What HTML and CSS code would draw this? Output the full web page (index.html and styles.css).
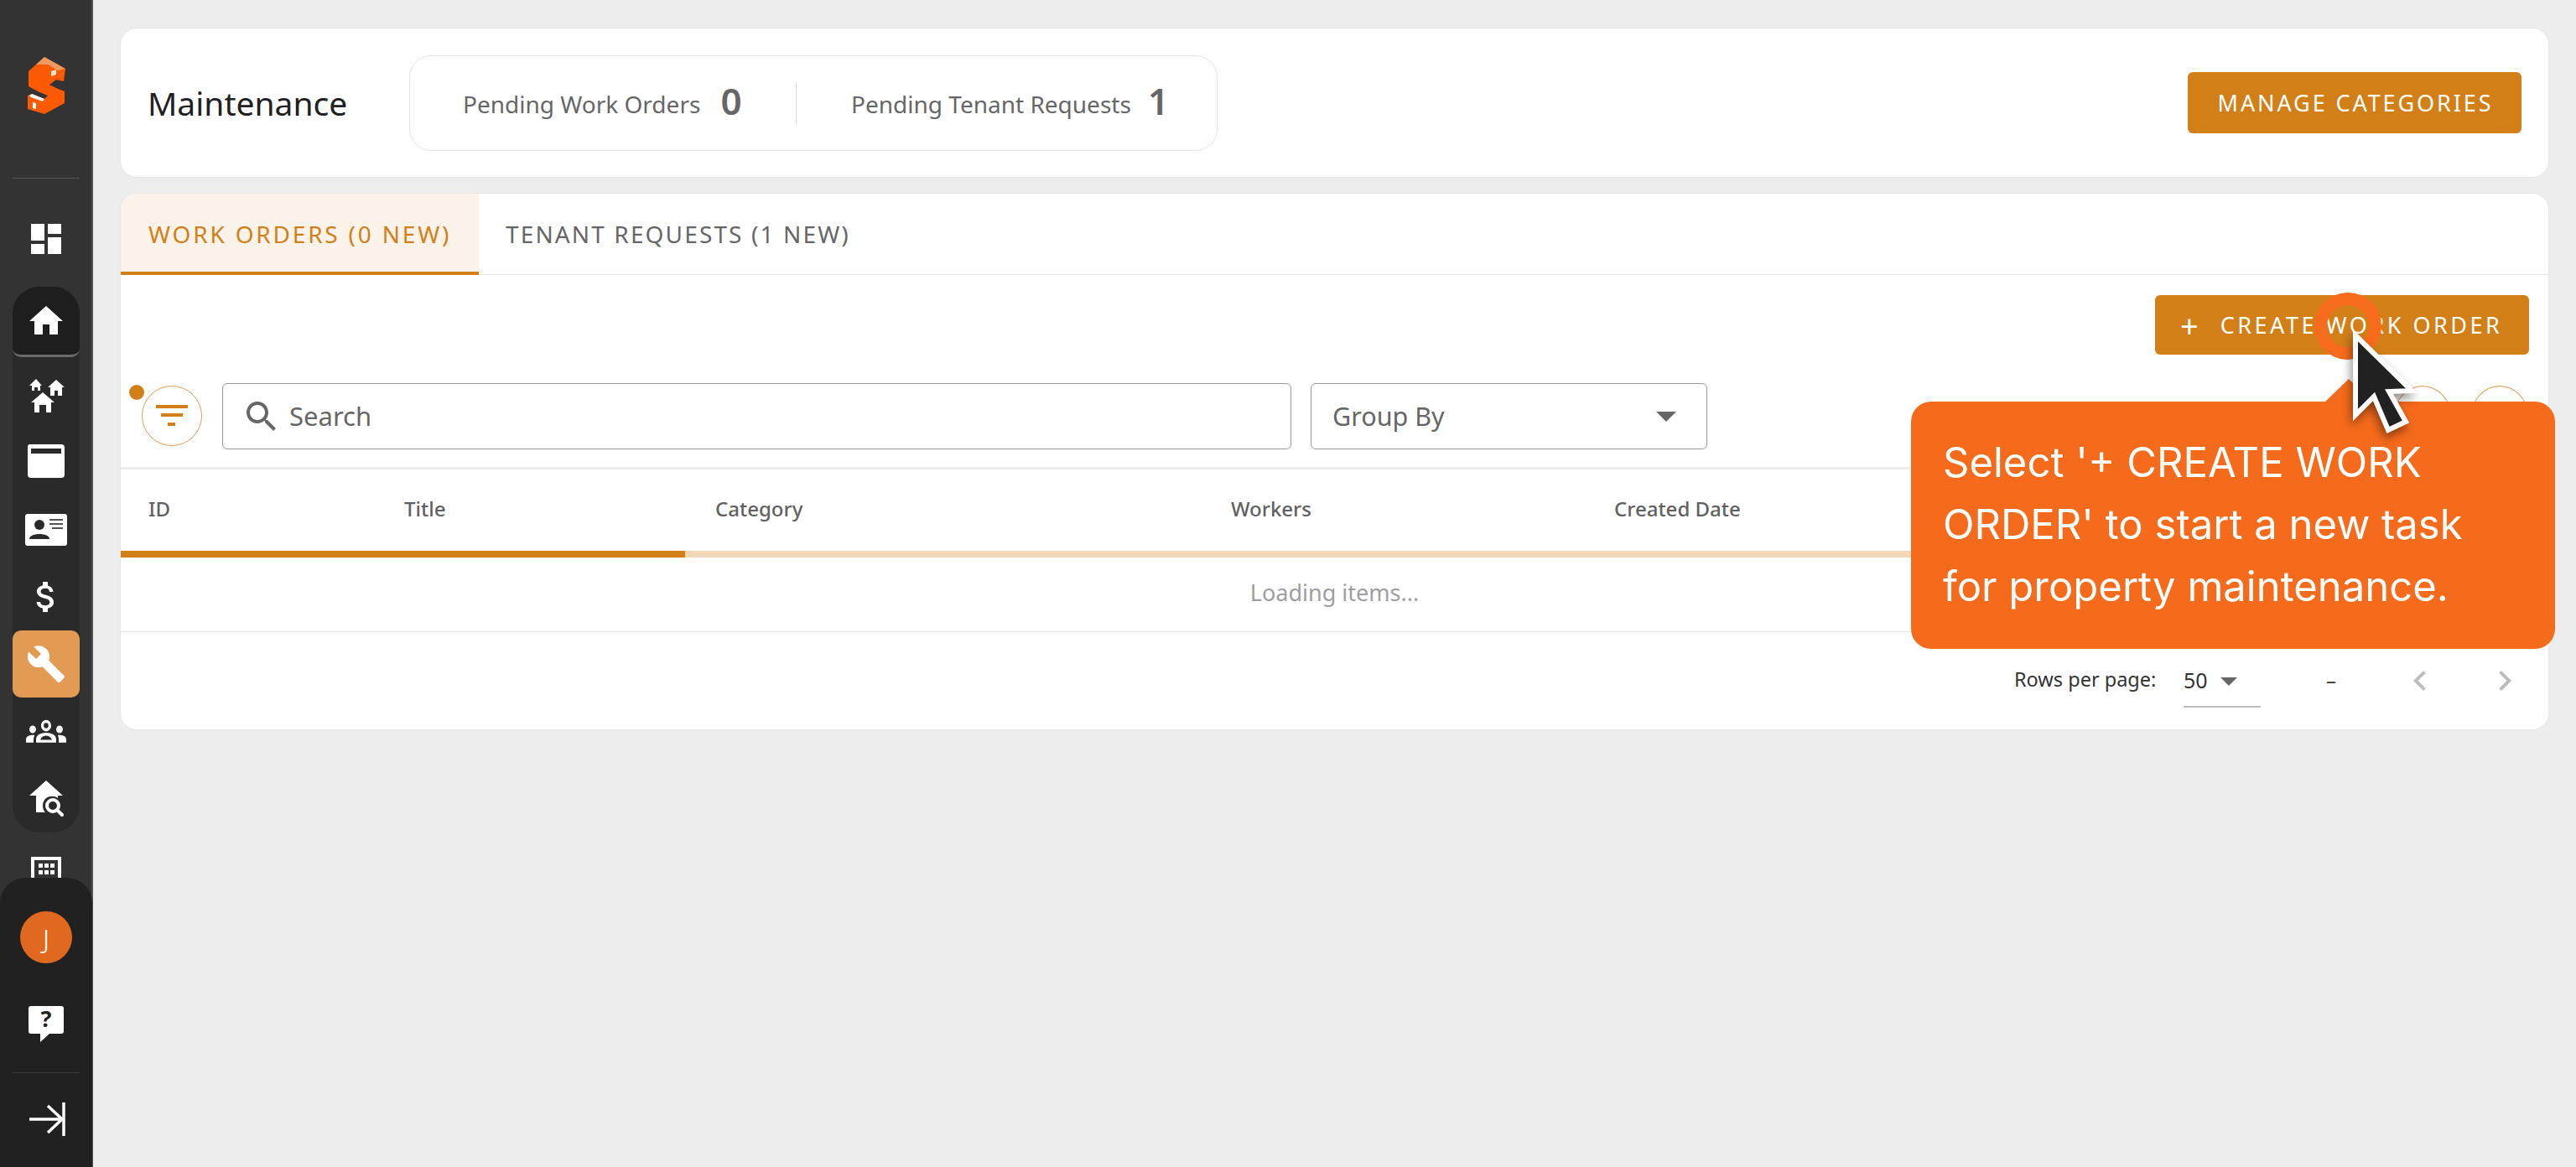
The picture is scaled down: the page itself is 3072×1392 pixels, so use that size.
FILE: index.html
```html
<!DOCTYPE html>
<html lang="en">
<head>
<meta charset="utf-8">
<title>Maintenance</title>
<link rel="stylesheet" href="styles.css">
</head>
<body>
<div class="app">
  <aside class="sidebar">
    <div class="nav">
      <div class="logo">
        <svg width="48" height="70" viewBox="-2 0 48 70">
          <path fill="#ff5a00" d="M20 0 L45 14 L43 29 L34 27 L26 33 L34 37 L44 41 L44 55 L20 68 L0 62 L0 46 L5 44 L20 50 L24 46 L12 41 L1 35 L1 17 Z"/>
          <path fill="#f09a62" d="M20 0 L45 14 L36 16 L24 9 L10 9 Z"/>
          <path fill="#fff" opacity=".8" d="M28 17 L34 15 L34 21 L28 23 Z"/>
          <path fill="#fff" d="M2 46 L5 44 L20 50 L18 53 L4 48 Z M6 54 L10 55 L10 62 L6 61 Z"/>
        </svg>
      </div>
      <div class="nav-item dash">
        <svg class="ico" viewBox="0 0 24 24"><path d="M3 13h8V3H3v10zm0 8h8v-6H3v6zm10 0h8V11h-8v10zm0-18v6h8V3h-8z"/></svg>
      </div>
      <div class="group">
        <div class="nav-item home">
          <svg class="ico" viewBox="0 0 24 24"><path d="M10 20v-6h4v6h5v-8h3L12 3 2 12h3v8z"/></svg>
        </div>
        <div class="nav-item">
          <svg class="ico" viewBox="0 0 48 48"><path d="M4 12 L12 4 L19 12 H17 V18 H14 V14 H10 V18 H7 V12Z M26 14 L36 5 L46 14 H43 V24 H38 V18 H34 V24 H29 V14Z M6 32 L20 20 L34 32 H30 V44 H24 V35 H16 V44 H10 V32Z"/></svg>
        </div>
        <div class="nav-item">
          <svg class="ico" viewBox="0 0 48 48"><path fill-rule="evenodd" d="M4 2 H42 Q46 2 46 6 V38 Q46 42 42 42 H6 Q2 42 2 38 V6 Q2 2 4 2Z M6 7 V13 H42 V7Z"/></svg>
        </div>
        <div class="nav-item">
          <svg class="ico wide" viewBox="0 0 50 38"><path fill="#fff" d="M3 0 H47 Q50 0 50 3 V35 Q50 38 47 38 H3 Q0 38 0 35 V3 Q0 0 3 0Z"/><circle cx="17" cy="13" r="6" fill="#2a2a2a"/><path fill="#2a2a2a" d="M5 30 C5 22 29 22 29 30Z"/><path fill="none" stroke="#555" stroke-width="2" d="M29 7H45M29 12H45M32 17H45"/></svg>
        </div>
        <div class="nav-item">
          <svg class="ico" viewBox="0 0 24 24"><path d="M11.8 10.9c-2.27-.59-3-1.2-3-2.15 0-1.09 1.01-1.85 2.7-1.85 1.78 0 2.44.85 2.5 2.1h2.21c-.07-1.72-1.12-3.3-3.21-3.81V3h-3v2.16c-1.94.42-3.5 1.68-3.5 3.61 0 2.31 1.91 3.46 4.7 4.13 2.5.6 3 1.48 3 2.41 0 .69-.49 1.79-2.7 1.79-2.06 0-2.87-.92-2.98-2.1h-2.2c.12 2.19 1.76 3.42 3.68 3.83V21h3v-2.15c1.95-.37 3.5-1.5 3.5-3.55 0-2.84-2.43-3.81-4.7-4.4z"/></svg>
        </div>
        <div class="nav-item active">
          <svg class="ico" viewBox="0 0 24 24"><path d="M22.7 19l-9.1-9.1c.9-2.3.4-5-1.5-6.9-2-2-5-2.4-7.4-1.3L9 6 6 9 1.6 4.7C.4 7.1.9 10.1 2.9 12.1c1.9 1.9 4.6 2.4 6.9 1.5l9.1 9.1c.4.4 1 .4 1.4 0l2.3-2.3c.5-.4.5-1.1.1-1.4z"/></svg>
        </div>
        <div class="nav-item">
          <svg class="people" viewBox="0 5.7 24 12.4" preserveAspectRatio="none"><path fill-rule="evenodd" d="M12 12.75c1.63 0 3.07.39 4.24.9 1.08.48 1.76 1.56 1.76 2.73V18H6v-1.61c0-1.18.68-2.26 1.76-2.73 1.17-.52 2.61-.91 4.24-.91zM8.5 16.5h7c-.6-1.4-2-2.2-3.5-2.2s-2.9.8-3.5 2.2zM4 13c1.1 0 2-.9 2-2s-.9-2-2-2-2 .9-2 2 .9 2 2 2zm1.13 1.1C4.76 14.04 4.39 14 4 14c-.99 0-1.93.21-2.78.58C.48 14.9 0 15.62 0 16.43V18h4.5v-1.61c0-.83.23-1.61.63-2.29zM20 13c1.1 0 2-.9 2-2s-.9-2-2-2-2 .9-2 2 .9 2 2 2zm4 3.43c0-.81-.48-1.53-1.22-1.85C21.93 14.21 20.99 14 20 14c-.39 0-.76.04-1.13.1.4.68.63 1.46.63 2.29V18H24v-1.57zM12 6c1.66 0 3 1.34 3 3s-1.34 3-3 3-3-1.34-3-3 1.34-3 3-3zm0 1.6A1.4 1.4 0 1 0 12 10.4 1.4 1.4 0 0 0 12 7.6z"/></svg>
        </div>
        <div class="nav-item">
          <svg class="ico" viewBox="0 0 48 48"><path d="M24 3 L44 21 H38 V24 C34 21 27 21 23 25 C19 29 19 37 23 41 H12 V21 H4Z"/><circle cx="32" cy="33" r="7" fill="none" stroke="#fff" stroke-width="4"/><path stroke="#fff" stroke-width="4" stroke-linecap="round" d="M37 38 L43 44"/></svg>
        </div>
      </div>
      <div class="nav-item building">
        <svg class="ico" viewBox="0 0 48 48"><path fill-rule="evenodd" d="M6 6 H42 V46 H6Z M10 10 V42 H38 V10Z M15 14 H20 V19 H15Z M22 14 H27 V19 H22Z M29 14 H34 V19 H29Z M15 22 H20 V27 H15Z M22 22 H27 V27 H22Z M29 22 H34 V27 H29Z"/></svg>
      </div>
    </div>
    <div class="side-bottom">
      <div class="avatar">J</div>
      <div class="help">
        <svg class="ico" viewBox="0 0 48 48"><path d="M6 3 H42 Q45 3 45 6 V33 Q45 36 42 36 H28 L17 46 V36 H6 Q3 36 3 33 V6 Q3 3 6 3Z"/><text x="24" y="28" class="help-q">?</text></svg>
      </div>
      <div class="side-rule"></div>
      <div class="expand">
        <svg width="48" height="48" viewBox="0 0 48 48"><path fill="none" stroke="#fff" stroke-width="3.5" d="M4 24 H44 M26 8 L43 24 L26 40"/><path stroke="#fff" stroke-width="3.5" d="M45 4 V44"/></svg>
      </div>
    </div>
  </aside>

  <main class="main">
    <section class="card head-card">
      <h1 class="title">Maintenance</h1>
      <div class="stats">
        <div class="stat first"><span>Pending Work Orders</span><b>0</b></div>
        <div class="stat second"><span>Pending Tenant Requests</span><b>1</b></div>
      </div>
      <button class="btn manage">MANAGE CATEGORIES</button>
    </section>

    <section class="card body-card">
      <div class="tabs">
        <div class="tab on">WORK ORDERS (0 NEW)</div>
        <div class="tab">TENANT REQUESTS (1 NEW)</div>
      </div>
      <div class="actions">
        <button class="btn create"><span class="plus">+</span>CREATE WORK ORDER</button>
      </div>
      <div class="filters">
        <div class="filter-btn">
          <span class="dot"></span>
          <svg width="38" height="26" viewBox="0 0 38 26"><path fill="#d27f18" d="M0 0H38V4H0Z M6 10H32V14H6Z M14 21H23V25H14Z"/></svg>
        </div>
        <div class="search">
          <svg width="48" height="48" viewBox="0 0 24 24"><path fill="#666" d="M15.5 14h-.79l-.28-.27C15.41 12.59 16 11.11 16 9.5 16 5.91 13.09 3 9.5 3S3 5.91 3 9.5 5.91 16 9.5 16c1.61 0 3.09-.59 4.23-1.57l.27.28v.79l5 4.99L20.49 19l-4.99-5zm-6 0C7.01 14 5 11.99 5 9.5S7.01 5 9.5 5 14 7.01 14 9.5 11.99 14 9.5 14z"/></svg>
          <span>Search</span>
        </div>
        <div class="group-by"><span>Group By</span><i class="caret"></i></div>
        <div class="spacer"></div>
        <div class="round"></div>
        <div class="round"></div>
      </div>
      <div class="thead">
        <span class="c-id">ID</span>
        <span class="c-title">Title</span>
        <span class="c-cat">Category</span>
        <span class="c-work">Workers</span>
        <span class="c-date">Created Date</span>
      </div>
      <div class="progress"><div class="progress-fill"></div></div>
      <div class="loading">Loading items...</div>
      <div class="pager">
        <span class="rows">Rows per page:</span>
        <div class="rows-select"><span>50</span><i class="caret small"></i></div>
        <span class="range">–</span>
        <svg class="chev" width="48" height="48" viewBox="0 0 24 24"><path fill="#bdbdbd" d="M15.41 7.41 14 6l-6 6 6 6 1.41-1.41L10.83 12z"/></svg>
        <svg class="chev next" width="48" height="48" viewBox="0 0 24 24"><path fill="#bdbdbd" d="M10 6 8.59 7.41 13.17 12l-4.58 4.59L10 18l6-6z"/></svg>
      </div>
    </section>
  </main>

  <div class="ring"></div>
  <div class="tooltip">
    <i class="tip-arrow"></i>
    <p>Select '+ CREATE WORK ORDER' to start a new task for property maintenance.</p>
  </div>
  <svg class="cursor" width="90" height="130" viewBox="0 0 90 130">
    <path fill="#212121" stroke="#fff" stroke-width="6" stroke-linejoin="miter" d="M7 8 V103 L29 81 L46 121 L67 111 L47 75 L74 74 Z"/>
  </svg>
</div>
</body>
</html>
```
FILE: styles.css
```css
* { box-sizing: border-box; }
html, body { margin: 0; height: 100%; }
body { background: #ededed; font-family: "Noto Sans", "Open Sans", sans-serif; overflow: hidden; }
.app { display: flex; height: 1392px; position: relative; }

/* sidebar */
.sidebar { width: 111px; flex: none; background: #333; border-right: 2px solid #505050; display: flex; flex-direction: column; height: 100%; }
.nav { flex: 1; min-height: 0; overflow: hidden; display: flex; flex-direction: column; align-items: center; }
.logo { flex: none; width: 80px; height: 213px; border-bottom: 1px solid #555; padding-top: 68px; display: flex; justify-content: center; align-items: flex-start; }
.nav-item { flex: none; width: 80px; height: 80px; display: flex; align-items: center; justify-content: center; }
.dash { margin-top: 32px; }
.group { flex: none; width: 80px; margin-top: 17px; background: #2a2a2a; border-radius: 32px; display: flex; flex-direction: column; height: 651px; }
.home { background: #1e1e1e; border-radius: 32px 32px 10px 10px; border-bottom: 3px solid #6a6a6a; height: 84px; margin-bottom: 6px; }
.active { background: #e39a52; border-radius: 10px; }
.building { margin-top: 7px; }
.ico { width: 48px; height: 48px; fill: #fff; display: block; }
.ico.wide { width: 50px; }
.people { width: 48px; height: 28px; fill: #fff; display: block; }
.side-bottom { flex: none; height: 345px; margin-right: -2px; width: 110px; background: #212121; border-radius: 30px 30px 0 0; display: flex; flex-direction: column; align-items: center; padding-top: 40px; }
.avatar { width: 62px; height: 62px; border-radius: 50%; background: #e1691f; color: #fff; display: flex; align-items: center; justify-content: center; font-size: 32px; font-weight: 300; }
.help { margin-top: 48px; height: 48px; }
.help-q { font: 700 27px "Noto Sans", sans-serif; fill: #222; text-anchor: middle; }
.side-rule { width: 80px; height: 1px; background: #3a3a3a; margin-top: 34px; }
.expand { margin-top: 31px; height: 48px; }

/* main */
.main { flex: 1; min-width: 0; padding: 33px 32px 0 32px; display: flex; flex-direction: column; gap: 18px; }
.card { background: #fff; border: 1px solid #e6e6e6; border-radius: 20px; }
.head-card { height: 179px; flex: none; display: flex; align-items: center; padding: 0 32px; }
.title { margin: 0; font-size: 39px; font-weight: 400; color: #212121; width: 312px; }
.stats { width: 964px; height: 114px; border: 1px solid #e4e4e4; border-radius: 26px; display: flex; align-items: center; }
.stat { display: flex; align-items: center; color: #666; font-size: 28px; }
.stat span { position: relative; top: 1px; }
.stat b { font-size: 44px; font-weight: 600; margin-left: 24px; color: #666; line-height: 1; position: relative; top: -3px; }
.first { width: 461px; padding-left: 63px; height: 50px; border-right: 1px solid #ddd; }
.second { padding-left: 65px; }
.second b { margin-left: 20px; }
.btn { border: 0; border-radius: 6px; background: #d27f18; color: #fff; font-family: inherit; font-size: 27px; letter-spacing: 2.9px; display: flex; align-items: center; white-space: nowrap; padding: 0; }
.manage { margin-left: auto; width: 398px; height: 73px; justify-content: center; padding-left: 2px; }
.create { width: 446px; height: 71px; padding-left: 30px; letter-spacing: 3.5px; }
.plus { font-size: 38px; font-weight: 400; margin-right: 26px; line-height: 1; letter-spacing: 0; }

.body-card { height: 641px; flex: none; display: flex; flex-direction: column; overflow: hidden; }
.tabs { flex: none; height: 97px; display: flex; border-bottom: 1px solid #e4e4e4; }
.tab { padding: 2px 32px 4px; font-size: 28px; letter-spacing: 2.13px; color: #666; display: flex; align-items: center; height: 97px; white-space: nowrap; }
.tab.on { background: #fbf3ea; color: #d27f18; border-bottom: 4px solid #d27f18; width: 427px; letter-spacing: 2.8px; padding: 2px 0 0 33px; }
.actions { flex: none; height: 129px; display: flex; justify-content: flex-end; padding: 24px 23px 0 0; }
.filters { flex: none; height: 103px; display: flex; align-items: flex-start; border-bottom: 3px solid #eee; padding-left: 25px; }
.filter-btn { position: relative; width: 72px; height: 72px; margin-top: 3px; border: 1px solid #e39a52; border-radius: 50%; display: flex; align-items: center; justify-content: center; flex: none; }
.dot { position: absolute; left: -16px; top: -2px; width: 18px; height: 18px; border-radius: 50%; background: #d27f18; }
.search { width: 1275px; height: 79px; margin-left: 24px; border: 1px solid #999; border-radius: 6px; display: flex; align-items: center; padding-left: 22px; color: #666; font-size: 31px; flex: none; }
.search span { margin-left: 9px; position: relative; top: -1px; }
.group-by { width: 473px; height: 79px; margin-left: 23px; border: 1px solid #999; border-radius: 6px; display: flex; align-items: center; padding: 0 36px 0 25px; justify-content: space-between; color: #666; font-size: 30.5px; flex: none; }
.group-by span { position: relative; top: -1px; }
.caret { width: 0; height: 0; border-left: 12px solid transparent; border-right: 12px solid transparent; border-top: 12px solid #666; display: block; }
.caret.small { border-left-width: 10px; border-right-width: 10px; border-top-width: 10px; }
.spacer { flex: 1; }
.round { width: 68px; height: 72px; margin-top: 3px; margin-right: 24px; border: 1px solid #e39a52; border-radius: 50%; flex: none; }
.thead { flex: none; height: 97px; display: grid; grid-template-columns: 305px 371px 615px 457px 1fr; align-items: center; padding: 0 0 5px 33px; font-size: 24px; font-weight: 500; color: #616161; }
.progress { flex: none; height: 8px; background: #f2d8b9; }
.progress-fill { width: 673px; height: 8px; background: #d27f18; }
.loading { flex: none; height: 89px; border-bottom: 1px solid #e4e4e4; display: flex; align-items: center; justify-content: center; font-size: 27px; color: #9e9e9e; padding-bottom: 6px; width: 100%; }
.pager { flex: 1; display: flex; align-items: flex-start; padding-top: 40px; font-size: 24px; color: #333; justify-content: flex-end; }
.rows { width: 202px; font-size: 23.5px; }
.rows-select { width: 92px; height: 50px; border-bottom: 2px solid #bbb; display: flex; align-items: flex-start; justify-content: space-between; padding-right: 28px; color: #333; font-size: 25px; }
.rows-select .caret { margin-top: 14px; border-top-color: #666; }
.range { width: 88px; margin-left: 78px; }
.chev { margin-top: -6px; margin-right: 53px; }
.chev.next { margin-right: 28px; }

/* overlay */
.ring { position: absolute; left: 2760px; top: 349px; width: 80px; height: 80px; border: 15px solid #f76b1c; border-radius: 50%; }
.tooltip { position: absolute; left: 2279px; top: 479px; width: 768px; height: 295px; border-radius: 24px; background: #f66b1b; color: #fff; font-family: Inter, sans-serif; font-size: 49px; line-height: 74px; padding: 36px 60px 0 38px; }
.tooltip p { margin: 0; }
.tip-arrow { position: absolute; left: 493px; top: -27px; width: 58px; height: 28px; background: #f66b1b; clip-path: polygon(50% 0, 100% 100%, 0 100%); display: block; }
.cursor { position: absolute; left: 2802px; top: 392px; filter: drop-shadow(-2px 6px 6px rgba(0,0,0,.45)); }
```
